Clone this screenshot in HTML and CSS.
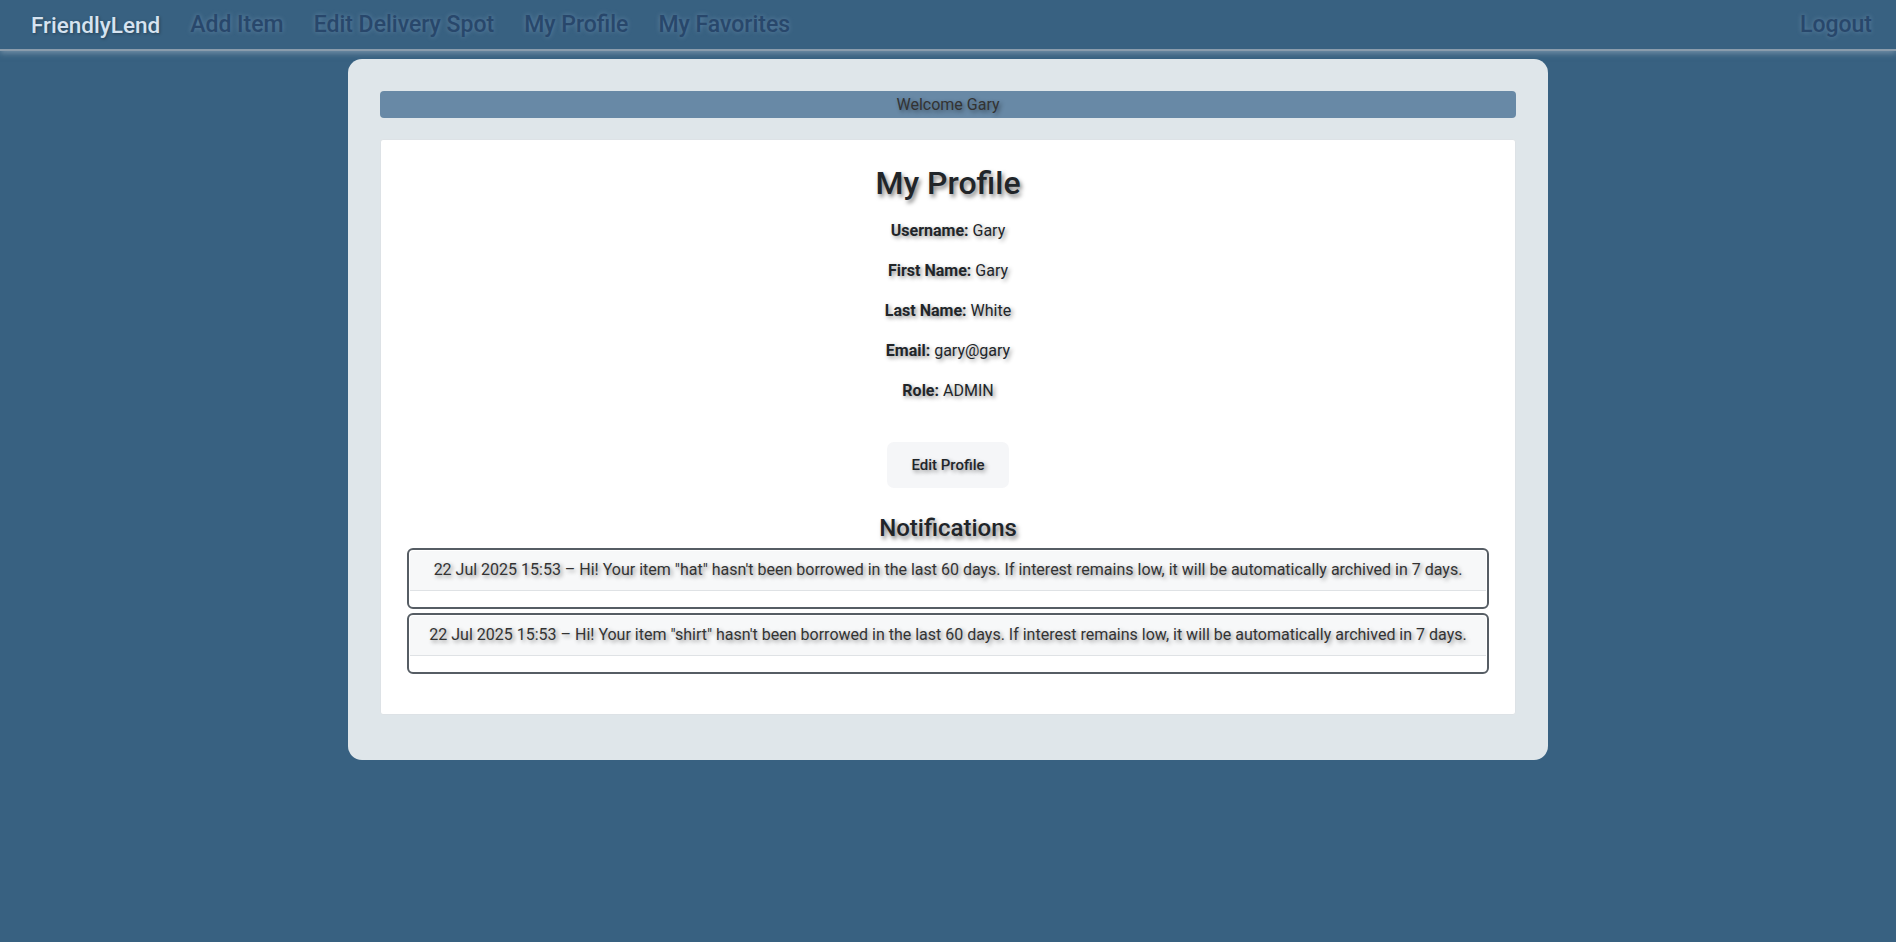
FILE: index.html
```html
<!DOCTYPE html>
<html lang="en">
<head>
<meta charset="utf-8">
<title>FriendlyLend - My Profile</title>
<link rel="stylesheet" href="styles.css">
</head>
<body>
<nav class="topbar">
  <a class="brand" href="#">FriendlyLend</a>
  <div class="nav-links">
    <a class="nav-link" href="#">Add Item</a>
    <a class="nav-link" href="#">Edit Delivery Spot</a>
    <a class="nav-link" href="#">My Profile</a>
    <a class="nav-link" href="#">My Favorites</a>
  </div>
  <a class="nav-link logout" href="#">Logout</a>
</nav>

<main class="shell">
  <div class="welcome">Welcome Gary</div>
  <section class="panel">
    <h2 class="title">My Profile</h2>
    <p class="row"><strong>Username:</strong> Gary</p>
    <p class="row"><strong>First Name:</strong> Gary</p>
    <p class="row"><strong>Last Name:</strong> White</p>
    <p class="row"><strong>Email:</strong> gary@gary</p>
    <p class="row"><strong>Role:</strong> ADMIN</p>
    <button class="edit-btn" type="button">Edit Profile</button>
    <h4 class="subtitle">Notifications</h4>
    <ul class="notes">
      <li class="note">
        <div class="note-head">22 Jul 2025 15:53 – Hi! Your item "hat" hasn't been borrowed in the last 60 days. If interest remains low, it will be automatically archived in 7 days.</div>
        <div class="note-body"></div>
      </li>
      <li class="note">
        <div class="note-head">22 Jul 2025 15:53 – Hi! Your item "shirt" hasn't been borrowed in the last 60 days. If interest remains low, it will be automatically archived in 7 days.</div>
        <div class="note-body"></div>
      </li>
    </ul>
  </section>
</main>
</body>
</html>
```

FILE: styles.css
```css
* { box-sizing: border-box; }

body {
  margin: 0;
  background: #386181;
  font-family: Roboto, "Liberation Sans", sans-serif;
  font-size: 16px;
  line-height: 1.5;
  color: #212529;
  min-height: 942px;
}

.topbar {
  height: 51px;
  display: flex;
  align-items: center;
  padding: 2px 24px 0 31px;
  background: #386181;
  border-bottom: 2px solid #8a9cac;
  box-shadow: 0 2px 6px rgba(170, 185, 200, 0.55);
}

.brand {
  font-size: 22.5px;
  font-weight: 500;
  color: #d6e3f0;
  text-decoration: none;
  text-shadow: 1px 1px 3px rgba(0, 0, 0, 0.35);
}

.nav-links {
  display: flex;
  gap: 30px;
  margin-left: 30px;
  flex: 1;
}

.nav-link {
  font-size: 23px;
  font-weight: 500;
  color: #28476b;
  text-decoration: none;
  text-shadow: 0 0 5px rgba(160, 190, 220, 0.4);
}

.shell {
  width: 1200px;
  margin: 8px auto 0;
  padding: 32px 32px 32px;
  background: #dfe6ea;
  border-radius: 14px;
}

.welcome {
  height: 27px;
  line-height: 28px;
  text-align: center;
  background: #6889a6;
  border-radius: 4px;
  color: #333;
  font-size: 16px;
  text-shadow: 2px 2px 4px rgba(0, 0, 0, 0.45);
  margin-bottom: 21px;
}

.panel {
  background: #fff;
  border: 1px solid #dde2e6;
  border-radius: 3px;
  padding: 24px 26px 24px;
  margin-bottom: 13px;
  text-align: center;
  display: flex;
  flex-direction: column;
  align-items: center;
}

.title {
  margin: 0 0 17px;
  font-size: 32px;
  font-weight: 500;
  line-height: 38px;
  color: #212529;
  text-shadow: 2px 3px 4px rgba(0, 0, 0, 0.5);
}

.row {
  margin: 0 0 16px;
  font-size: 16px;
  line-height: 24px;
  color: #212529;
  text-shadow: 2px 2px 4px rgba(0, 0, 0, 0.45);
}

.row strong { font-weight: 700; }

.edit-btn {
  margin-top: 23px;
  height: 46px;
  width: 122px;
  border: none;
  border-radius: 7px;
  background: #f5f6f8;
  font-family: inherit;
  font-size: 15px;
  font-weight: 500;
  color: #212529;
  text-shadow: 2px 2px 4px rgba(0, 0, 0, 0.45);
}

.subtitle {
  margin: 26px 0 5px;
  font-size: 24px;
  font-weight: 500;
  line-height: 29px;
  color: #212529;
  text-shadow: 2px 3px 4px rgba(0, 0, 0, 0.5);
}

.notes {
  list-style: none;
  margin: 0 0 16px;
  padding: 0;
  width: 100%;
  display: flex;
  flex-direction: column;
  gap: 4px;
}

.note {
  border: 2px solid #565d64;
  border-radius: 6px;
  height: 61px;
  padding: 1px;
  overflow: hidden;
}

.note-head {
  background: #f7f8f9;
  border-bottom: 1px solid #dfe2e5;
  border-radius: 4px 4px 0 0;
  padding: 7px 16px 8px;
  font-size: 16px;
  line-height: 24px;
  color: #333;
  text-shadow: 2px 2px 4px rgba(0, 0, 0, 0.45);
}

.note-body { height: 15px; }
```
